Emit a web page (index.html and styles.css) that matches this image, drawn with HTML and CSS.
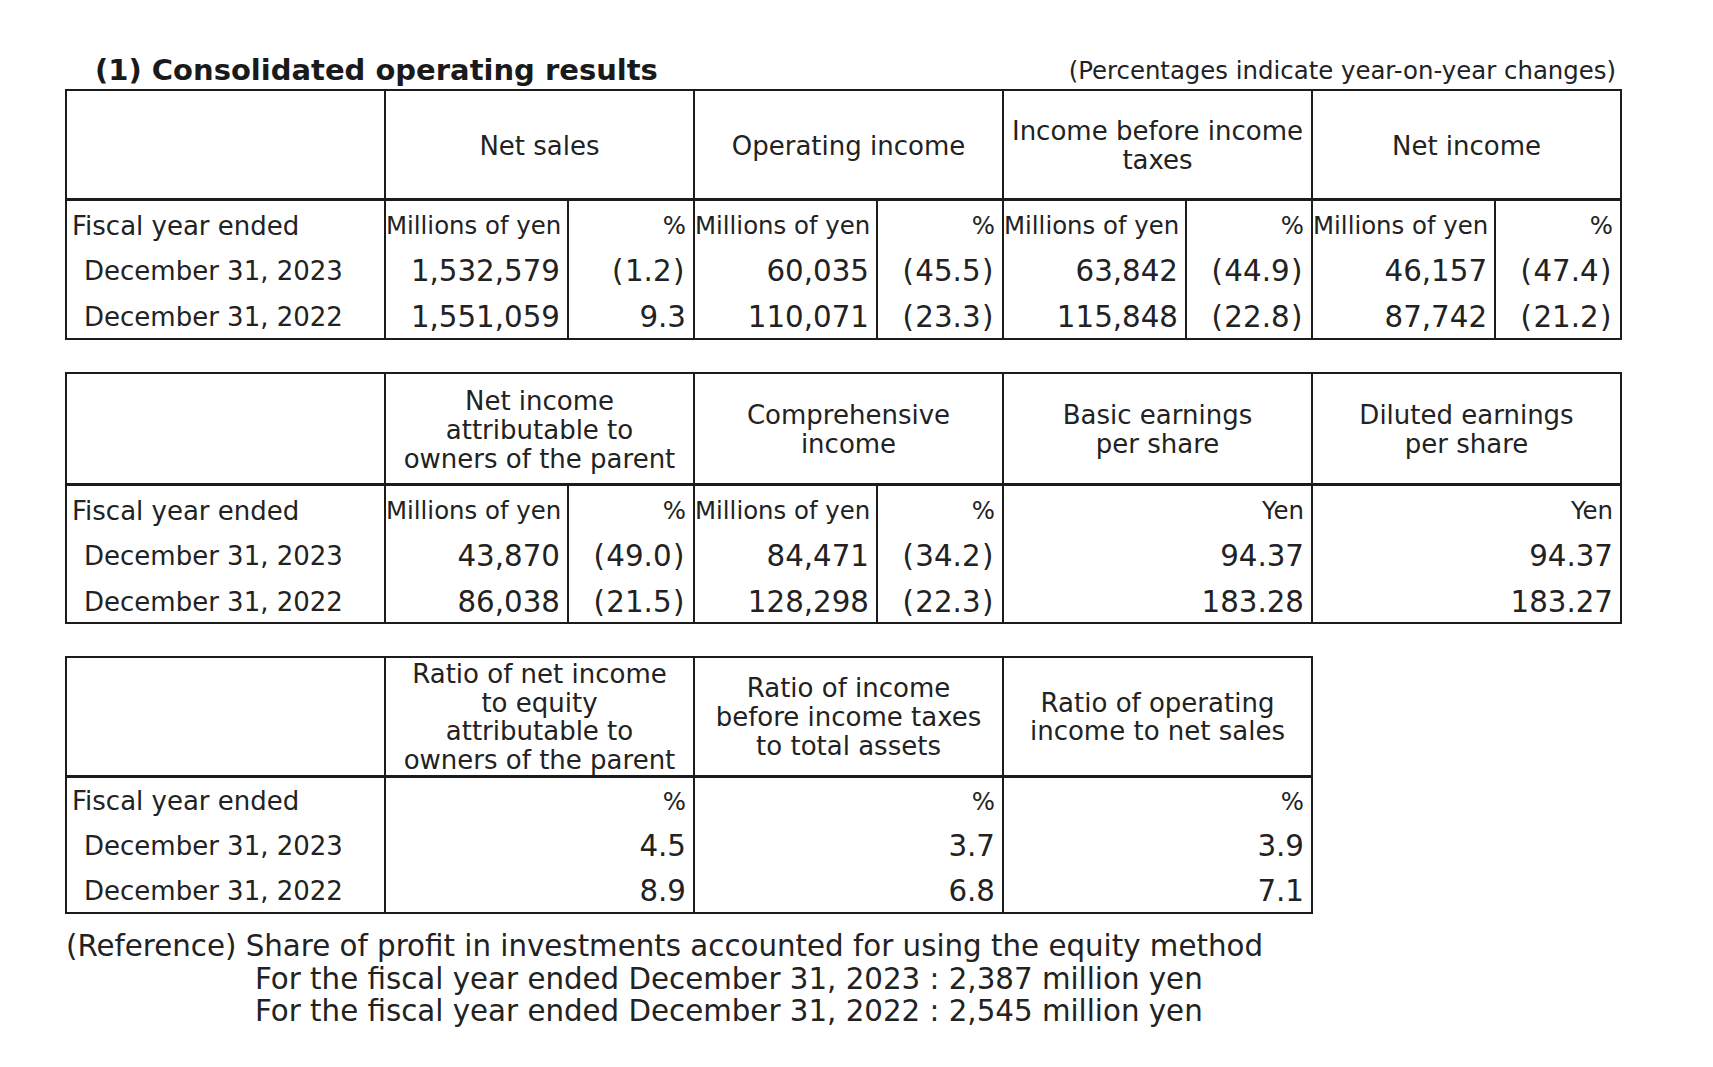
FILE: index.html
```html
<!DOCTYPE html>
<html lang="en">
<head>
<meta charset="utf-8">
<title>Consolidated operating results</title>
<link rel="stylesheet" href="styles.css">
</head>
<body>
<div class="page">
  <div class="title-row">
    <h2 class="title">(1) Consolidated operating results</h2>
    <span class="note">(Percentages indicate year-on-year changes)</span>
  </div>

  <table class="fin full t1">
    <colgroup>
      <col class="c-label"><col class="c-mil"><col class="c-pct"><col class="c-mil"><col class="c-pct"><col class="c-mil"><col class="c-pct"><col class="c-mil"><col class="c-pct">
    </colgroup>
    <thead>
      <tr class="head h1">
        <th></th>
        <th colspan="2">Net sales</th>
        <th colspan="2">Operating income</th>
        <th colspan="2">Income before income<br>taxes</th>
        <th colspan="2">Net income</th>
      </tr>
    </thead>
    <tbody>
      <tr>
        <td class="lbl">Fiscal year ended</td>
        <td class="unit">Millions of yen</td><td class="unit">%</td>
        <td class="unit">Millions of yen</td><td class="unit">%</td>
        <td class="unit">Millions of yen</td><td class="unit">%</td>
        <td class="unit">Millions of yen</td><td class="unit">%</td>
      </tr>
      <tr>
        <td class="date">December 31, 2023</td>
        <td class="num">1,532,579</td><td class="num"><span class="pa">(</span>1.2<span class="pa">)</span></td>
        <td class="num">60,035</td><td class="num"><span class="pa">(</span>45.5<span class="pa">)</span></td>
        <td class="num">63,842</td><td class="num"><span class="pa">(</span>44.9<span class="pa">)</span></td>
        <td class="num">46,157</td><td class="num"><span class="pa">(</span>47.4<span class="pa">)</span></td>
      </tr>
      <tr>
        <td class="date">December 31, 2022</td>
        <td class="num">1,551,059</td><td class="num">9.3</td>
        <td class="num">110,071</td><td class="num"><span class="pa">(</span>23.3<span class="pa">)</span></td>
        <td class="num">115,848</td><td class="num"><span class="pa">(</span>22.8<span class="pa">)</span></td>
        <td class="num">87,742</td><td class="num"><span class="pa">(</span>21.2<span class="pa">)</span></td>
      </tr>
    </tbody>
  </table>

  <table class="fin full t2">
    <colgroup>
      <col class="c-label"><col class="c-mil"><col class="c-pct"><col class="c-mil"><col class="c-pct"><col class="c-grp"><col class="c-grp">
    </colgroup>
    <thead>
      <tr class="head h2">
        <th></th>
        <th colspan="2">Net income<br>attributable to<br>owners of the parent</th>
        <th colspan="2">Comprehensive<br>income</th>
        <th>Basic earnings<br>per share</th>
        <th>Diluted earnings<br>per share</th>
      </tr>
    </thead>
    <tbody>
      <tr>
        <td class="lbl">Fiscal year ended</td>
        <td class="unit">Millions of yen</td><td class="unit">%</td>
        <td class="unit">Millions of yen</td><td class="unit">%</td>
        <td class="unit">Yen</td>
        <td class="unit">Yen</td>
      </tr>
      <tr>
        <td class="date">December 31, 2023</td>
        <td class="num">43,870</td><td class="num"><span class="pa">(</span>49.0<span class="pa">)</span></td>
        <td class="num">84,471</td><td class="num"><span class="pa">(</span>34.2<span class="pa">)</span></td>
        <td class="num">94.37</td>
        <td class="num">94.37</td>
      </tr>
      <tr>
        <td class="date">December 31, 2022</td>
        <td class="num">86,038</td><td class="num"><span class="pa">(</span>21.5<span class="pa">)</span></td>
        <td class="num">128,298</td><td class="num"><span class="pa">(</span>22.3<span class="pa">)</span></td>
        <td class="num">183.28</td>
        <td class="num">183.27</td>
      </tr>
    </tbody>
  </table>

  <table class="fin part t3">
    <colgroup>
      <col class="c-label"><col class="c-grp"><col class="c-grp"><col class="c-grp">
    </colgroup>
    <thead>
      <tr class="head h3">
        <th></th>
        <th>Ratio of net income<br>to equity<br>attributable to<br>owners of the parent</th>
        <th>Ratio of income<br>before income taxes<br>to total assets</th>
        <th>Ratio of operating<br>income to net sales</th>
      </tr>
    </thead>
    <tbody>
      <tr>
        <td class="lbl">Fiscal year ended</td>
        <td class="unit">%</td>
        <td class="unit">%</td>
        <td class="unit">%</td>
      </tr>
      <tr>
        <td class="date">December 31, 2023</td>
        <td class="num">4.5</td>
        <td class="num">3.7</td>
        <td class="num">3.9</td>
      </tr>
      <tr>
        <td class="date">December 31, 2022</td>
        <td class="num">8.9</td>
        <td class="num">6.8</td>
        <td class="num">7.1</td>
      </tr>
    </tbody>
  </table>

  <div class="footnote">
    <p class="fn-head">(Reference) Share of profit in investments accounted for using the equity method</p>
    <p class="fn-line">For the fiscal year ended December 31, 2023 : 2,387 million yen</p>
    <p class="fn-line">For the fiscal year ended December 31, 2022 : 2,545 million yen</p>
  </div>
</div>
</body>
</html>
```

FILE: styles.css
```css
html, body {
  margin: 0;
  padding: 0;
  background: #ffffff;
}

body {
  font-family: "DejaVu Sans", Verdana, sans-serif;
  color: #222222;
}

.page {
  padding: 55px 0 0 65px;
  width: 1556px;
}

.title-row {
  display: flex;
  justify-content: space-between;
  align-items: flex-end;
  height: 34px;
  padding: 0 5px 0 30px;
}

.title {
  margin: 0 0 2px;
  font-size: 29px;
  line-height: 34px;
  font-weight: bold;
  color: #1a1a1a;
}

.note {
  font-size: 24.4px;
  line-height: 28px;
  margin-bottom: 4px;
}

.fin {
  border-collapse: collapse;
  table-layout: fixed;
  margin-bottom: 32px;
}

.fin.full {
  width: 1556px;
}

.fin.part {
  width: 1247px;
  margin-bottom: 0;
}

.c-label { width: 319px; }
.c-mil { width: 183px; }
.c-pct { width: 126px; }
.c-grp { width: 309px; }

.fin th,
.fin td {
  border-left: 2px solid #1c1c1c;
  border-right: 2px solid #1c1c1c;
  padding: 0;
}

.fin thead th {
  border-top: 2px solid #1c1c1c;
  border-bottom: 3px solid #1c1c1c;
  font-weight: normal;
  font-size: 26px;
  line-height: 29px;
  text-align: center;
  vertical-align: middle;
}

.fin tbody tr:last-child td {
  border-bottom: 2px solid #1c1c1c;
}

.head.h1 { height: 109px; }
.head.h2 { height: 112px; }
.head.h3 { height: 120px; }

.fin .h1 th { padding-top: 4px; }
.fin .h2 th { padding-top: 4px; }
.fin .h3 th { line-height: 28.7px; padding-top: 2px; }

.fin tbody tr { height: 46px; }
.fin.t1 tbody tr { height: 46.5px; }
.fin.t3 tbody tr { height: 45.5px; }

.fin tbody td {
  vertical-align: middle;
  padding-top: 5px;
  white-space: nowrap;
}

.fin.t3 tbody td { padding-top: 2px; }

.fin td.lbl {
  font-size: 26px;
  text-align: left;
  padding-left: 5px;
}

.fin td.date {
  font-size: 26px;
  text-align: left;
  padding-left: 17px;
}

.fin td.unit {
  font-size: 24.4px;
  text-align: right;
  padding-right: 7px;
}

.fin td.num {
  font-size: 29.3px;
  text-align: right;
  padding-right: 7px;
}

.pa {
  margin: 0 1.5px;
}

.footnote {
  margin-top: 16px;
  font-size: 29.3px;
  line-height: 32.5px;
}

.footnote p {
  margin: 0;
}

.fn-head {
  padding-left: 1px;
}

.fn-line {
  padding-left: 190px;
}
```
